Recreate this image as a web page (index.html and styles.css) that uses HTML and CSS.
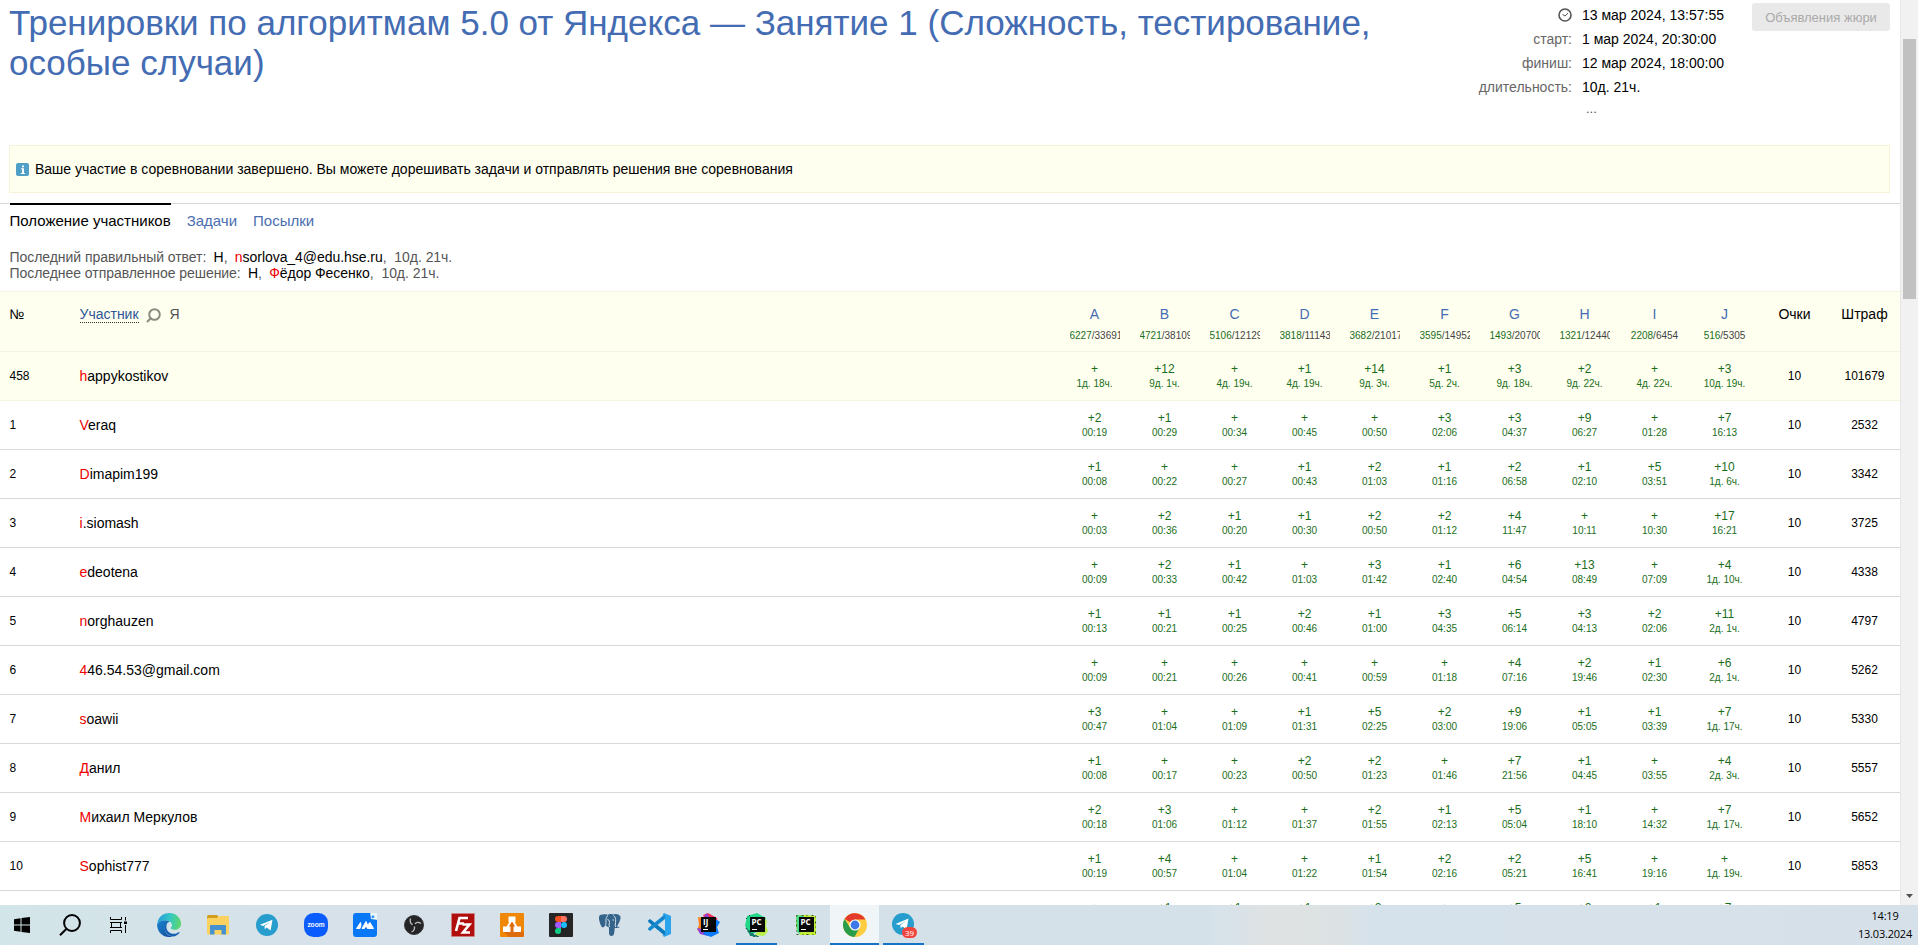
FILE: index.html
```html
<!DOCTYPE html>
<html lang="ru">
<head>
<meta charset="utf-8">
<title>Тренировки по алгоритмам 5.0 от Яндекса</title>
<link rel="stylesheet" href="styles.css">
</head>
<body>
<div class="screen">
<div class="viewport">
<main class="page">
<header class="top">
<h1 class="title">Тренировки по алгоритмам 5.0 от Яндекса — Занятие 1 (Сложность, тестирование, особые случаи)</h1>
<dl class="times">
<dt><svg width="14" height="14" viewBox="0 0 14 14" fill="none" stroke="#555"><circle cx="7" cy="7" r="6" stroke-width="1.6"/><path d="M4.500 6.500 7 8l3-2.800" stroke-width="1"/></svg></dt><dd>13 мар 2024, 13:57:55</dd>
<dt>старт:</dt><dd>1 мар 2024, 20:30:00</dd>
<dt>финиш:</dt><dd>12 мар 2024, 18:00:00</dd>
<dt>длительность:</dt><dd>10д. 21ч.</dd>
<dt></dt><dd class="more">...</dd>
</dl>
<button class="jury" disabled>Объявления жюри</button>
</header>
<div class="notice"><svg width="13" height="13" viewBox="0 0 13 13"><rect width="13" height="13" rx="2" fill="#4f9fc6"/><path d="M6 2.500h2v1.700H6zM5 5.300h3V10h1v1H4.700v-1H6V6.300H5z" fill="#fff"/></svg><span>Ваше участие в соревновании завершено. Вы можете дорешивать задачи и отправлять решения вне соревнования</span></div>
<nav class="tabs"><a class="tab active">Положение участников</a><a class="tab">Задачи</a><a class="tab">Посылки</a></nav>
<div class="last">
<p>Последний правильный ответ: <span class="who">H</span>, <span class="who"><em>n</em>sorlova_4@edu.hse.ru</span>, <span class="ago">10д. 21ч.</span></p>
<p>Последнее отправленное решение: <span class="who">H</span>, <span class="who"><em>Ф</em>ёдор Фесенко</span>, <span class="ago">10д. 21ч.</span></p>
</div>
<table class="board">
<colgroup><col class="c-num"><col class="c-name"><col span="12" class="c-task"></colgroup>
<thead>
<tr><th class="num">№</th><th class="name"><span class="sort">Участник</span><svg class="lens" width="15" height="15" viewBox="0 0 15 15" fill="none" stroke="#8b8b80" stroke-width="2"><circle cx="8.500" cy="6.500" r="5.300"/><path d="M4.700 10.300 1 14"/></svg><span class="me">Я</span></th>
<th><a>A</a><small><i>6227</i>/33691</small></th><th><a>B</a><small><i>4721</i>/38109</small></th><th><a>C</a><small><i>5106</i>/12129</small></th><th><a>D</a><small><i>3818</i>/11143</small></th><th><a>E</a><small><i>3682</i>/21017</small></th><th><a>F</a><small><i>3595</i>/14952</small></th><th><a>G</a><small><i>1493</i>/20700</small></th><th><a>H</a><small><i>1321</i>/12440</small></th><th><a>I</a><small><i>2208</i>/6454</small></th><th><a>J</a><small><i>516</i>/5305</small></th><th>Очки</th><th>Штраф</th></tr>
</thead>
<tbody>
<tr class="mine"><td class="num">458</td><td class="name"><em>h</em>appykostikov</td><td>+<small>1д. 18ч.</small></td><td>+12<small>9д. 1ч.</small></td><td>+<small>4д. 19ч.</small></td><td>+1<small>4д. 19ч.</small></td><td>+14<small>9д. 3ч.</small></td><td>+1<small>5д. 2ч.</small></td><td>+3<small>9д. 18ч.</small></td><td>+2<small>9д. 22ч.</small></td><td>+<small>4д. 22ч.</small></td><td>+3<small>10д. 19ч.</small></td><td class="sum">10</td><td class="sum">101679</td></tr>
<tr><td class="num">1</td><td class="name"><em>V</em>eraq</td><td>+2<small>00:19</small></td><td>+1<small>00:29</small></td><td>+<small>00:34</small></td><td>+<small>00:45</small></td><td>+<small>00:50</small></td><td>+3<small>02:06</small></td><td>+3<small>04:37</small></td><td>+9<small>06:27</small></td><td>+<small>01:28</small></td><td>+7<small>16:13</small></td><td class="sum">10</td><td class="sum">2532</td></tr>
<tr><td class="num">2</td><td class="name"><em>D</em>imapim199</td><td>+1<small>00:08</small></td><td>+<small>00:22</small></td><td>+<small>00:27</small></td><td>+1<small>00:43</small></td><td>+2<small>01:03</small></td><td>+1<small>01:16</small></td><td>+2<small>06:58</small></td><td>+1<small>02:10</small></td><td>+5<small>03:51</small></td><td>+10<small>1д. 6ч.</small></td><td class="sum">10</td><td class="sum">3342</td></tr>
<tr><td class="num">3</td><td class="name"><em>i</em>.siomash</td><td>+<small>00:03</small></td><td>+2<small>00:36</small></td><td>+1<small>00:20</small></td><td>+1<small>00:30</small></td><td>+2<small>00:50</small></td><td>+2<small>01:12</small></td><td>+4<small>11:47</small></td><td>+<small>10:11</small></td><td>+<small>10:30</small></td><td>+17<small>16:21</small></td><td class="sum">10</td><td class="sum">3725</td></tr>
<tr><td class="num">4</td><td class="name"><em>e</em>deotena</td><td>+<small>00:09</small></td><td>+2<small>00:33</small></td><td>+1<small>00:42</small></td><td>+<small>01:03</small></td><td>+3<small>01:42</small></td><td>+1<small>02:40</small></td><td>+6<small>04:54</small></td><td>+13<small>08:49</small></td><td>+<small>07:09</small></td><td>+4<small>1д. 10ч.</small></td><td class="sum">10</td><td class="sum">4338</td></tr>
<tr><td class="num">5</td><td class="name"><em>n</em>orghauzen</td><td>+1<small>00:13</small></td><td>+1<small>00:21</small></td><td>+1<small>00:25</small></td><td>+2<small>00:46</small></td><td>+1<small>01:00</small></td><td>+3<small>04:35</small></td><td>+5<small>06:14</small></td><td>+3<small>04:13</small></td><td>+2<small>02:06</small></td><td>+11<small>2д. 1ч.</small></td><td class="sum">10</td><td class="sum">4797</td></tr>
<tr><td class="num">6</td><td class="name"><em>4</em>46.54.53@gmail.com</td><td>+<small>00:09</small></td><td>+<small>00:21</small></td><td>+<small>00:26</small></td><td>+<small>00:41</small></td><td>+<small>00:59</small></td><td>+<small>01:18</small></td><td>+4<small>07:16</small></td><td>+2<small>19:46</small></td><td>+1<small>02:30</small></td><td>+6<small>2д. 1ч.</small></td><td class="sum">10</td><td class="sum">5262</td></tr>
<tr><td class="num">7</td><td class="name"><em>s</em>oawii</td><td>+3<small>00:47</small></td><td>+<small>01:04</small></td><td>+<small>01:09</small></td><td>+1<small>01:31</small></td><td>+5<small>02:25</small></td><td>+2<small>03:00</small></td><td>+9<small>19:06</small></td><td>+1<small>05:05</small></td><td>+1<small>03:39</small></td><td>+7<small>1д. 17ч.</small></td><td class="sum">10</td><td class="sum">5330</td></tr>
<tr><td class="num">8</td><td class="name"><em>Д</em>анил</td><td>+1<small>00:08</small></td><td>+<small>00:17</small></td><td>+<small>00:23</small></td><td>+2<small>00:50</small></td><td>+2<small>01:23</small></td><td>+<small>01:46</small></td><td>+7<small>21:56</small></td><td>+1<small>04:45</small></td><td>+<small>03:55</small></td><td>+4<small>2д. 3ч.</small></td><td class="sum">10</td><td class="sum">5557</td></tr>
<tr><td class="num">9</td><td class="name"><em>М</em>ихаил Меркулов</td><td>+2<small>00:18</small></td><td>+3<small>01:06</small></td><td>+<small>01:12</small></td><td>+<small>01:37</small></td><td>+2<small>01:55</small></td><td>+1<small>02:13</small></td><td>+5<small>05:04</small></td><td>+1<small>18:10</small></td><td>+<small>14:32</small></td><td>+7<small>1д. 17ч.</small></td><td class="sum">10</td><td class="sum">5652</td></tr>
<tr><td class="num">10</td><td class="name"><em>S</em>ophist777</td><td>+1<small>00:19</small></td><td>+4<small>00:57</small></td><td>+<small>01:04</small></td><td>+<small>01:22</small></td><td>+1<small>01:54</small></td><td>+2<small>02:16</small></td><td>+2<small>05:21</small></td><td>+5<small>16:41</small></td><td>+<small>19:16</small></td><td>+<small>1д. 19ч.</small></td><td class="sum">10</td><td class="sum">5853</td></tr>
<tr><td></td><td></td><td>+</td><td>+1</td><td>+1</td><td>+1</td><td>+2</td><td>+</td><td>+5</td><td>+2</td><td>+1</td><td>+7</td><td></td><td></td></tr>
</tbody>
</table>
</main>
<div class="scrollbar"><div class="thumb"></div><svg class="down" width="7" height="4" viewBox="0 0 7 4"><path d="M0 0h7L3.500 4z" fill="#505050"/></svg></div>
</div>
<footer class="taskbar">
<div class="slots">
<div class="slot win"><svg width="16" height="16" viewBox="0 0 16 16"><path d="M0 2.200 6.500 1.300V7.500H0zM7.500 1.100 16 0V7.500H7.500zM0 8.500h6.500v6.200L0 13.800zM7.500 8.500H16V16L7.500 14.900z"/></svg></div>
<div class="slot find"><svg width="22" height="22" viewBox="0 0 22 22" fill="none" stroke="#000" stroke-width="2"><circle cx="13" cy="9" r="7.900"/><path d="M7.300 15 1 21.300"/></svg></div>
<div class="slot view"><svg width="17" height="16" viewBox="0 0 17 16" fill="none" stroke="#000" stroke-width="1"><path d="M.5 0v2.500h11V0M.5 16v-2.500h11V16M0 5.500h12M0 10.500h12M1.500 5.500v5M10.500 5.500v5M15.500 0v3.500M15.500 8v8"/><path d="M14 4.500h3v2.500h-3z" fill="#000" stroke="none"/></svg></div>
<div class="slot"><svg width="24" height="24" viewBox="0 0 24 24"><defs><linearGradient id="e1" x1="0" y1=".3" x2="1" y2=".4"><stop offset="0" stop-color="#289be0"/><stop offset=".55" stop-color="#36c8c0"/><stop offset="1" stop-color="#5ed66a"/></linearGradient><linearGradient id="e2" x1="0" y1="0" x2="1" y2="1"><stop offset="0" stop-color="#1b83ce"/><stop offset="1" stop-color="#124a9c"/></linearGradient></defs><path d="M.3 10.200C1.200 3.800 6.400 0 12 0c7 0 12 5 12 10.500 0 4-3 6.300-6.300 6.300-2.500 0-3.900-.8-3.900-1.700 0-.7 1.200-1.200 1.200-3 0-2.500-2.800-4.500-6.300-4.500C4.800 7.600 1.500 9 .3 10.200z" fill="url(#e1)"/><path d="M.1 11.500C1 8.800 4.500 7.500 8.700 7.600c1.500 0 3 .4 4 1.100-3 1-5 3.800-5 6.500 0 4.300 3.500 8 8 8.200-1.200.4-2.400.6-3.700.6C5 24 0 18.400.1 11.500z" fill="url(#e2)"/><path d="M9.500 13c-.9 4.500 3.400 8 7.500 7.800 2.200 0 3.900-1 5-1.800.6-.3.900.1.600.6-1.200 2-3.500 3.500-5.900 4-5.500 0-9.500-4.500-9-9 .2-2.200 1.200-4 3-5.200C9.800 10.500 9.600 11.800 9.500 13z" fill="#155fb2"/></svg></div>
<div class="slot"><svg width="24" height="20" viewBox="0 0 24 20"><rect x="1" y="0" width="11" height="6" rx="1.500" fill="#d29c1d"/><rect x="1" y="3" width="22" height="16.500" rx="1" fill="#fbd25f"/><path d="M11 3l1.500-2H22a1 1 0 0 1 1 1v3H11z" fill="#fbd25f"/><path d="M4 19.500V11q0-1 1-1h14q1 0 1 1v8.500h-4.500V15h-7v4.500z" fill="#4691cf"/></svg></div>
<div class="slot"><svg width="22" height="22" viewBox="0 0 22 22"><circle cx="11" cy="11" r="11" fill="#269dcc"/><path d="M4 10.800 16.500 5.800l-1.900 10.600-4-3-1.800 1.800-.3-3.200L14 8l-6.900 4z" fill="#fff"/></svg></div>
<div class="slot"><svg width="24" height="24" viewBox="0 0 24 24"><rect width="24" height="24" rx="9.500" fill="#0b5cff"/><text x="12" y="14" text-anchor="middle" class="zoomword">zoom</text></svg></div>
<div class="slot"><svg width="24" height="24" viewBox="0 0 24 24"><path d="M3 0h14l1 6 6 1v14q0 3-3 3H3q-3 0-3-3V3q0-3 3-3z" fill="#0878f7"/><path d="M18 0h6v6h-4q-2-1-2-6z" fill="#eaf5fc"/><circle cx="20" cy="3.800" r="1.400" fill="#278ff3"/><path d="M3.500 15.500 7.500 9.500 8 12l-1 3.500zM9 15.500l4-7 1.500 3.500L17 9.500l3.500 6h-6l-1.500-3-1.500 3z" fill="#fff" stroke="#fff" stroke-linejoin="round"/></svg></div>
<div class="slot"><svg width="20" height="20" viewBox="0 0 20 20"><circle cx="10" cy="10" r="9.500" fill="#242326" stroke="#38373a"/><path d="M10 10Q5 9 6.500 3.500M10 10q3-4.500 7-1.500M10 10q2 5-2.500 7" fill="none" stroke="#bebec2" stroke-width="1.300"/><circle cx="10" cy="10" r="1.500" fill="#19191b"/></svg></div>
<div class="slot"><svg width="24" height="24" viewBox="0 0 24 24"><rect x=".5" y=".5" width="23" height="23" fill="#b00d0d" stroke="#d98a8a" stroke-dasharray="1 1"/><path d="M5 18 8.500 5H17M7.300 10.500H13M11.500 11.500h7l-6.500 8h7" fill="none" stroke="#fff" stroke-width="2.600"/></svg></div>
<div class="slot"><svg width="24" height="24" viewBox="0 0 24 24"><rect width="24" height="24" rx="1" fill="#f08705"/><path d="M13 8 24 20v3l-1 1H9l-5-5z" fill="#df6c0c"/><path d="M11.500 7 7 15M12.500 7 17 15" stroke="#fff" stroke-width="2"/><path d="M8.500 3.500h7v5.500h-7zM3 13.500h7.500V19H3zM13.500 13.500H21V19h-7.500z" fill="#fff"/></svg></div>
<div class="slot"><svg width="24" height="24" viewBox="0 0 24 24"><rect width="24" height="24" rx="1" fill="#252525"/><path d="M12 3H9a3 3 0 0 0 0 6h3z" fill="#f24e1e"/><path d="M12 3h3a3 3 0 0 1 0 6h-3z" fill="#ff7262"/><path d="M12 9H9a3 3 0 0 0 0 6h3z" fill="#a259ff"/><circle cx="15" cy="12" r="3" fill="#1abcfe"/><path d="M12 15H9a3 3 0 1 0 3 3z" fill="#0acf83"/></svg></div>
<div class="slot"><svg width="24" height="24" viewBox="0 0 24 24"><path d="M5 1.500C1 1 .5 4 1.300 7.500c.7 3.300 2.200 7 3.500 7 1 0 1.700-1.500 2.700-2.500 1 2 3 1.500 3.500 2.500V20c0 2 1 3 2.500 3s2.500-1 2.700-3l.6-5c3 0 5-.5 5-1.300h-3C21 10.500 23 6 22.500 3.500 21 .5 17 .5 15 1.500 12.500.8 11 1 10 1.800 8.300 1 6.500 1 5 1.500z" fill="#35648b"/><path d="M10 2.500C7 4.500 8.500 8 7.700 12M15.500 2.500c4 3.500 1 7.500 2 11.500M9.500 6.500q2 0 2 3-1 3 0 4.500M14.500 7h1.500" stroke="#d7e3eb" fill="none" stroke-width="1"/></svg></div>
<div class="slot"><svg width="24" height="24" viewBox="0 0 24 24"><path d="M1 7.500 3 6l15 12v5L1.300 9z" fill="#0879bd"/><path d="M1 16.500 3 18 18 6V1L1.300 15z" fill="#1588ce"/><path d="M17 0l7 3v18l-7 3-1.500-2H18V2h-2.500z" fill="#2ba4ee"/></svg></div>
<div class="slot"><svg width="24" height="24" viewBox="0 0 24 24"><path d="M2 4l7 1-2 16-6-4 2-5z" fill="#fc801d"/><path d="M7 2l5-2 9 5 1 8-8 4z" fill="#fe315d"/><path d="M8 3 11 0l3 6zM1 15l6 1 5 7-8-2z" fill="#8c45d6"/><path d="M18 5l6 4-3 5 2 6-8 4-8-3 6-8z" fill="#087cfa"/><rect x="5" y="4" width="15" height="15" fill="#080808"/><text x="7" y="12" class="ide">IJ</text><path d="M7 16.500h5" stroke="#fff"/></svg></div>
<div class="slot running"><svg width="24" height="24" viewBox="0 0 24 24"><path d="M2 3l10-3 9 5-2 11-14 6-5-9z" fill="#21d789"/><path d="M18 3l4 5-1 5 2 5-4 5-9-1 6-8z" fill="#b9ee46"/><path d="M1 15l7 6 6 3-8-1zM1 6l4-4" fill="#087" stroke="#165443" stroke-dasharray="2 2"/><rect x="5" y="4" width="15" height="15" fill="#080808"/><text x="6.500" y="12" class="ide">PC</text><path d="M7 16.500h5" stroke="#fff"/></svg></div>
<div class="slot"><svg width="24" height="24" viewBox="0 0 24 24"><path d="M2 2h12l8 1v19H6l-4-7z" fill="#c1ef38"/><path d="M2 2l8 1-4 18-3-2z" fill="#4cdb88"/><path d="M2.500 2.500h19v19h-19z" fill="none" stroke="#3b5720" stroke-dasharray="1 4 2 3"/><rect x="5" y="4" width="15" height="15" fill="#080808"/><text x="6.500" y="12" class="ide">PC</text><path d="M7 16.500h5" stroke="#fff"/></svg></div>
<div class="slot current"><svg width="24" height="24" viewBox="0 0 24 24"><circle cx="12" cy="12" r="12" fill="#ffcd40"/><path d="M12 12 1.600 6A12 12 0 0 1 22.400 6.500H12z" fill="#e33b2e"/><path d="M1.600 6A12 12 0 0 0 11.500 24l5-9.300L12 12 7 14.500z" fill="#2a9d4a"/><circle cx="12" cy="12" r="5.600" fill="#fff"/><circle cx="12" cy="12" r="4.400" fill="#3e78e6"/></svg></div>
<div class="slot running"><svg width="26" height="26" viewBox="0 0 26 26"><circle cx="12" cy="12" r="11" fill="#269dcc"/><path d="M4.500 12 17.500 6.500l-2 11-4-3-1.800 1.800-.3-3.200L15 9l-6.900 4z" fill="#fff"/><rect x="11" y="15" width="15" height="11" rx="5.500" fill="#f0453f"/><text x="18.500" y="23.500" text-anchor="middle" class="badge">39</text></svg></div>
</div>
<div class="clock"><span>14:19</span><span>13.03.2024</span></div>
</footer>
</div>
</body>
</html>
```

FILE: styles.css
```css
* { box-sizing: border-box; }
body { margin: 0; font: 14px/16px "Liberation Sans", Arial, sans-serif; color: #000; background: #fff; }
.screen { display: flex; flex-direction: column; width: 1918px; height: 945px; overflow: hidden; }
.viewport { display: flex; height: 905px; overflow: hidden; }
.page { width: 1900px; flex: none; }
.top { display: flex; height: 145px; padding-left: 9px; }
.title { width: 1430px; margin: 3px 0 0; font-size: 35px; line-height: 40px; font-weight: 400; color: #446cb3; }
.times { display: grid; grid-template-columns: 133px 170px; column-gap: 10px; grid-auto-rows: 24px; width: 313px; margin: 3px 0 0; line-height: 24px; align-content: start; }
.times dt { text-align: right; color: #666; }
.times dt svg { display: block; margin: 5px 0 0 auto; }
.times dd { margin: 0; }
.times .more { padding-left: 4px; line-height: 20px; color: #555; font-size: 13px; }
.jury { width: 138px; height: 28px; margin: 3px 0 0; padding: 0; border: 0; border-radius: 3px; background: #e9e9e9; color: #aaa; font: 13px "Liberation Sans", Arial, sans-serif; }
.notice { display: flex; align-items: center; gap: 6px; height: 48px; margin: 0 10px 0 9px; padding: 0 0 0 6px; border: 1px solid #f6f3d9; background: #fffff0; }
.tabs { display: flex; gap: 16px; height: 46px; margin-top: 10px; padding-left: 9.5px; border-top: 1px solid #d9d9d4; font-size: 15px; color: #4a6eb0; }
.tab { padding-top: 9px; }
.tab.active { height: 20px; margin-top: -1px; border-top: 2px solid #000; padding-top: 8px; color: #000; }
.last { height: 42px; padding: 0 9.5px; color: #555; }
.last p { margin: 0; letter-spacing: -.05px; }
.who { color: #000; margin-left: 3.500px; }
.ago { margin-left: 4px; }
em { font-style: normal; color: #e00; }
.board { width: 1900px; margin-left: -.5px; table-layout: fixed; border-collapse: separate; border-spacing: 0; }
.c-num { width: 70px; }
.c-task { width: 70px; }
th, td { padding: 0 10px; text-align: center; overflow: hidden; white-space: nowrap; border-bottom: 1px solid #d9d9d9; }
th { height: 61px; padding-top: 14px; vertical-align: top; font-weight: 400; line-height: 16px; background: #fffff0; border-top: 1px solid #f6f3e0; border-bottom-color: #f6f3e0; }
th a { display: block; color: #446cb3; }
small { display: block; margin-top: 1px; font-size: 10px; line-height: 12px; }
th small { margin-top: 8px; color: #444; overflow: hidden; }
small i { font-style: normal; color: #1a6e1a; }
td { height: 49px; padding-bottom: 1px; font-size: 12px; line-height: 15px; color: #1a6e1a; }
.mine td { background: #fffff0; border-bottom-color: #f6f3e0; }
.board .num, .board .name { text-align: left; color: #000; }
.board td.name { padding-bottom: 0; font-size: 14px; }
td.num, td.sum { padding-bottom: 0; }
td.sum { color: #000; }
tbody tr:last-child td { vertical-align: top; padding-top: 10px; }
.sort { color: #2e5797; border-bottom: 1px dotted #333; }
.lens { margin: 0 9px 0 7px; vertical-align: -4px; }
.me { color: #555; }
.scrollbar { position: relative; flex: 1; background: #f1f1f1; border-left: 1px solid #e6e6e6; }
.thumb { height: 260px; margin: 39px 2px 0; background: #c1c1c1; }
.down { position: absolute; left: 5px; bottom: 7px; }
.taskbar { display: flex; justify-content: space-between; height: 40px; background: linear-gradient(90deg, #d2e5e8 0, #d6e1e9 300px, #d4e1e9 1200px, #d8e2e9 1230px, #dfe2e2 1270px, #dce2e4 1340px, #d6e2eb 1370px, #d6e0e9 1918px); }
.slots { display: flex; }
.slot { display: flex; align-items: center; justify-content: center; width: 49px; height: 40px; border: 0 solid #1673c5; }
.win { width: 44px; }
.find { width: 52px; }
.view { width: 48px; padding-right: 3px; }
.slot.running, .slot.current { border-bottom-width: 2px; padding-top: 2px; }
.slot.running { height: 40px; width: 41px; margin: 0 4px; }
.current { background: #f0f5f8; }
.zoomword { font: bold 7px Lato, sans-serif; fill: #fff; }
.ide { font: bold 8px "Open Sans", sans-serif; fill: #fff; }
.badge { font: 8px "Open Sans", sans-serif; fill: #fff; }
.clock { display: flex; flex-direction: column; align-items: center; width: 66px; padding-top: 2px; font: 11px/18px "Open Sans", sans-serif; letter-spacing: -.2px; }
```
